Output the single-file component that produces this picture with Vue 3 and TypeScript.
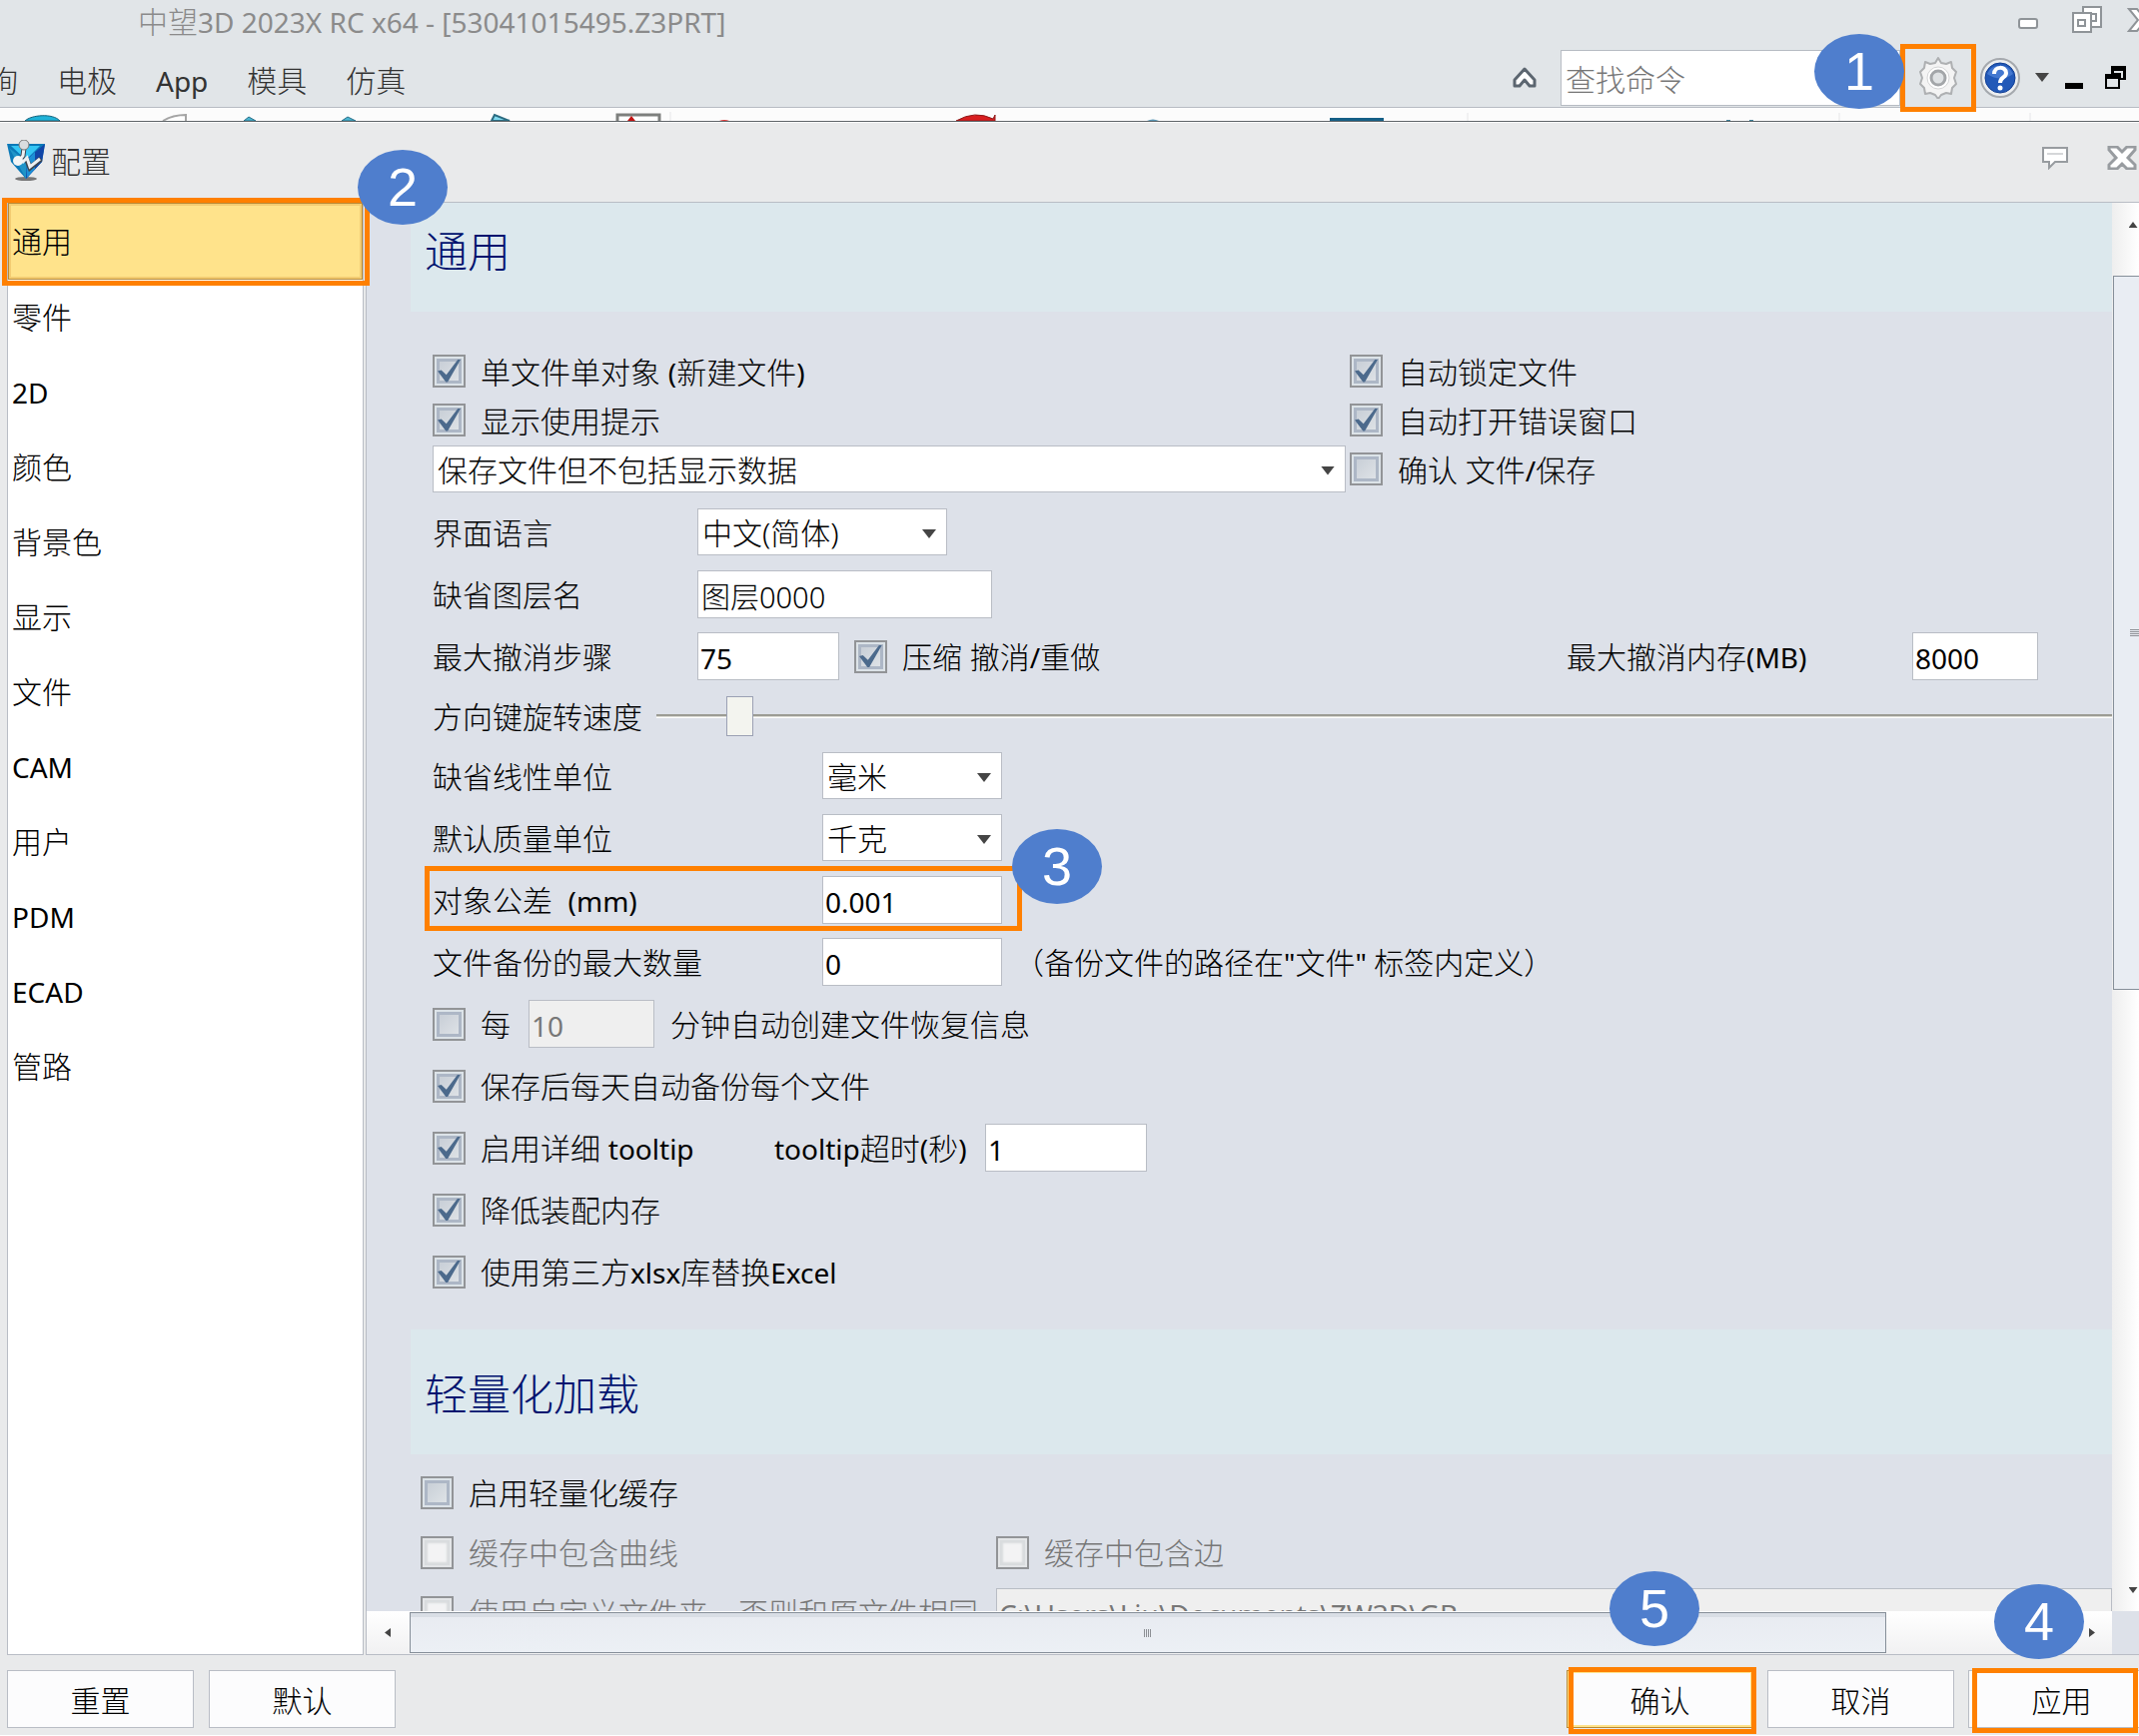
<script setup lang="ts">
import { ref } from 'vue'

interface Category {
  name: string
  latin?: boolean
}

const categories: Category[] = [
  { name: '通用' },
  { name: '零件' },
  { name: '2D', latin: true },
  { name: '颜色' },
  { name: '背景色' },
  { name: '显示' },
  { name: '文件' },
  { name: 'CAM', latin: true },
  { name: '用户' },
  { name: 'PDM', latin: true },
  { name: 'ECAD', latin: true },
  { name: '管路' },
]
const active = ref('通用')

const form = ref({
  singleObject: true,
  showTips: true,
  autoLock: true,
  autoError: true,
  confirmSave: false,
  saveMode: '保存文件但不包括显示数据',
  language: '中文(简体)',
  layer: '图层0000',
  undoSteps: '75',
  compressUndo: true,
  undoMemory: '8000',
  speed: 49,
  linearUnit: '毫米',
  massUnit: '千克',
  tolerance: '0.001',
  backups: '0',
  recovery: false,
  minutes: '10',
  dailyBackup: true,
  tooltip: true,
  timeout: '1',
  lowMemory: true,
  xlsx: true,
  cache: false,
  curves: false,
  edges: false,
  customDir: false,
  dir: 'C:\\Users\\Liu\\Documents\\ZW3D\\GB',
})
</script>

<template>
  <div class="app">
    <header class="titlebar">
      <h1 class="title">中望<span class="lat">3D 2023X RC x64 - [53041015495.Z3PRT]</span></h1>
      <div class="window-controls">
        <button type="button" aria-label="最小化">
          <svg width="22" height="28"><rect x="2" y="13" width="18" height="9" rx="2" fill="#fff" stroke="#8f9498" stroke-width="2" /></svg>
        </button>
        <button type="button" aria-label="还原">
          <svg width="32" height="28" fill="#fff" stroke="#8f9498" stroke-width="2">
            <path d="M12 1h18v20H12z" /><path d="M18 8h7v7h-7z" />
            <path d="M2 7h18v19H2z" /><path d="M7 14h7v6H7z" />
          </svg>
        </button>
        <button type="button" class="close" aria-label="关闭">
          <svg width="30" height="28"><path d="M2 3h8l5 6 5-6h8l-9 11 9 11h-8l-5-6-5 6H2l9-11z" fill="#fff" stroke="#8f9498" stroke-width="2" /></svg>
        </button>
      </div>
    </header>

    <div class="menubar">
      <nav class="menu">
        <a href="#">查询</a>
        <a href="#">电极</a>
        <a href="#" class="lat">App</a>
        <a href="#">模具</a>
        <a href="#">仿真</a>
      </nav>
      <div class="tools">
        <button type="button" class="collapse" aria-label="折叠">
          <svg width="24" height="22"><path d="M12 2 22 13v6h-5l-5-6-5 6H2v-6z" fill="#fff" stroke="#5c6670" stroke-width="3" stroke-linejoin="round" /></svg>
        </button>
        <input class="search" type="text" placeholder="查找命令" aria-label="查找命令" />
        <div class="gear-slot">
          <button type="button" class="gear" aria-label="配置">
            <svg width="42" height="42" viewBox="0 0 42 42">
              <path d="M21 1l3 5 5 1 5-2 1 6 4 4-2 6 2 6-4 4-1 6-5-1-5 2-3 4-3-4-5-2-5 1-1-6-4-4 2-6-2-6 4-4 1-6 5 2 5-1z" fill="#f4f4f4" stroke="#aeb0b2" stroke-width="2" stroke-linejoin="round" />
              <circle cx="21" cy="21" r="11" fill="#fff" stroke="#d4d5d6" />
              <circle cx="21" cy="21" r="7" fill="#dfe2e4" stroke="#a3a6a9" stroke-width="3" />
            </svg>
          </button>
          <span class="badge badge-1">1</span>
        </div>
        <button type="button" class="help" aria-label="帮助">
          <svg width="42" height="42" viewBox="0 0 42 42">
            <circle cx="21" cy="21" r="19" fill="#eceef0" stroke="#a5a9ae" stroke-width="2" />
            <circle cx="21" cy="21" r="15" fill="#2259b8" stroke="#123f94" stroke-width="1" />
            <path d="M8 17a14 13 0 0 1 26 0c-8 6-17 6-26 0z" fill="#5b8ee0" opacity=".6" />
            <path d="M15 17c0-8 12-8 12-1 0 5-6 4-6 10" fill="none" stroke="#fff" stroke-width="4" />
            <circle cx="21" cy="31" r="2.500" fill="#fff" />
          </svg>
        </button>
        <button type="button" class="more" aria-label="更多">
          <svg width="14" height="10"><path d="M0 0h14L7 9z" fill="#454545" /></svg>
        </button>
        <button type="button" class="mdi-min" aria-label="最小化文档">
          <svg width="18" height="24"><path d="M0 17h18v6H0z" fill="#000" /></svg>
        </button>
        <button type="button" aria-label="还原文档">
          <svg width="22" height="24"><path d="M6 0h15v14h-6V8H6z" /><path d="M9 5h9v7h-2V7H9z" fill="#e1e5e8" /><path d="M0 8h15v15H0z" /><path d="M2 13h11v8H2z" fill="#e1e5e8" /></svg>
        </button>
      </div>
    </div>

    <div class="ribbon" aria-hidden="true">
      <svg width="2141" height="13">
        <path d="M25 13c6-6 28-8 35 0z" fill="#1fb2d8" stroke="#16637c" />
        <path d="M163 13q10-6 23-6v6" fill="#fff" stroke="#a5a5a5" stroke-width="2" />
        <path d="m244 13 5-4 7 4zM342 13l6-4 8 4z" fill="#4bb6d2" stroke="#286f88" />
        <path d="m492 13 3-6 15 6z" fill="#7fd9ef" stroke="#2b6b80" stroke-width="2" />
        <path d="M618 13V7h42v6" fill="#fff" stroke="#7e807e" stroke-width="3" /><path d="m628 13 4-5 4 5z" fill="#c31212" />
        <path d="M720 13q5-2 10 0z" fill="#d33" />
        <path d="M957 13q19-11 37-2l2-4v6z" fill="#d81e20" stroke="#8f1a1a" />
        <path d="M1148 13q6-3 12 0z" fill="#5895b4" />
        <path d="M1331 10h54v3h-54z" fill="#155f86" />
        <path d="M1728 12h4v1h-4zM1751 12h4v1h-4z" fill="#3c7f98" />
        <path d="M671 4v9M1469 5v8M1841 5v8M2032 5v8" stroke="#e6e6e8" />
      </svg>
    </div>

    <section class="dialog">
      <header class="dialog-head">
        <svg class="logo" width="38" height="42" viewBox="0 0 38 42">
          <ellipse cx="19" cy="39" rx="11" ry="2" fill="#777" />
          <path d="M0 4h38l-3 18-16 17L4 22z" fill="#0b79b8" />
          <path d="M4 6h29L19 20z" fill="#35c6f4" />
          <path d="M38 4 19 20v19l16-17z" fill="#1146a8" />
          <path d="M28 12 20 20v18l8-9z" fill="#1c8fd6" />
          <path d="M2 8 19 39 20 22z" fill="#1f94c8" />
          <path d="m17 8-1 8-5 6M19 18l4 10 11-9" fill="none" stroke="#3d4650" stroke-width="5" />
          <path d="m17 8-1 8-5 6M15 23l5-5 3 9 10-8" fill="none" stroke="#eceff1" stroke-width="3" />
          <circle cx="17" cy="5" r="5" fill="#d9dddf" stroke="#777" />
          <circle cx="11" cy="21" r="5" fill="#f2f4f5" />
        </svg>
        <h2>配置</h2>
        <div class="dialog-controls">
          <button type="button" aria-label="反馈">
            <svg width="28" height="24"><path d="M2 2h24v14H14l-6 6v-6H2z" fill="#fff" stroke="#989ca0" stroke-width="2" /><path d="M6 7h16v2H6z" fill="#d5d7d9" /></svg>
          </button>
          <button type="button" aria-label="关闭">
            <svg width="30" height="24"><path d="M2 1h8l5 5 5-5h8v3l-7 8 7 7v4h-8l-5-5-5 5H2v-4l7-7-7-8z" fill="#fff" stroke="#989ca0" stroke-width="3" /></svg>
          </button>
        </div>
      </header>

      <div class="dialog-body">
        <aside class="sidebar">
          <button
            v-for="c in categories"
            :key="c.name"
            type="button"
            :class="['cat', { active: active === c.name }]"
            @click="active = c.name"
          >
            <span :class="{ lat: c.latin }">{{ c.name }}</span>
            <span v-if="active === c.name" class="mark mark-cat"></span>
            <span v-if="active === c.name" class="badge badge-2">2</span>
          </button>
        </aside>

        <div class="panel">
          <div class="view">
            <main class="content">
              <h3 class="band band-first">通用</h3>
              <div class="top-grid">
                <label class="row check"><input v-model="form.singleObject" type="checkbox" /><span>单文件单对象 <span class="lat">(</span>新建文件<span class="lat">)</span></span></label>
                <label class="row check"><input v-model="form.autoLock" type="checkbox" /><span>自动锁定文件</span></label>
                <label class="row check"><input v-model="form.showTips" type="checkbox" /><span>显示使用提示</span></label>
                <label class="row check"><input v-model="form.autoError" type="checkbox" /><span>自动打开错误窗口</span></label>
                <div class="row">
                  <div class="select full"><select v-model="form.saveMode" aria-label="保存方式"><option>保存文件但不包括显示数据</option></select></div>
                </div>
                <label class="row check"><input v-model="form.confirmSave" type="checkbox" /><span>确认 文件<span class="lat">/</span>保存</span></label>
              </div>

              <div class="form">
                <div class="row">
                  <label class="name" for="lang">界面语言</label>
                  <div class="select w-lang"><select id="lang" v-model="form.language"><option>中文(简体)</option></select></div>
                </div>
                <div class="row">
                  <label class="name" for="layer">缺省图层名</label>
                  <input id="layer" v-model="form.layer" class="text w-layer" type="text" />
                </div>
                <div class="row">
                  <label class="name" for="undo">最大撤消步骤</label>
                  <input id="undo" v-model="form.undoSteps" class="text w-undo" type="text" />
                  <label class="check undo-check"><input v-model="form.compressUndo" type="checkbox" /><span>压缩 撤消<span class="lat">/</span>重做</span></label>
                  <div class="memory">
                    <label class="plain" for="mem">最大撤消内存<span class="lat">(MB)</span></label>
                    <input id="mem" v-model="form.undoMemory" class="text w-num" type="text" />
                  </div>
                </div>
                <div class="row slider-row">
                  <label class="plain" for="speed">方向键旋转速度</label>
                  <input id="speed" v-model="form.speed" type="range" min="0" max="1000" />
                </div>
                <div class="row">
                  <label class="name wide" for="linear">缺省线性单位</label>
                  <div class="select w-unit"><select id="linear" v-model="form.linearUnit"><option>毫米</option></select></div>
                </div>
                <div class="row">
                  <label class="name wide" for="mass">默认质量单位</label>
                  <div class="select w-unit"><select id="mass" v-model="form.massUnit"><option>千克</option></select></div>
                </div>
                <div class="row">
                  <div class="tolerance">
                    <label class="name wide" for="tol">对象公差&nbsp; <span class="lat">(mm)</span></label>
                    <input id="tol" v-model="form.tolerance" class="text w-unit" type="text" />
                    <span class="mark mark-tol"></span>
                    <span class="badge badge-3">3</span>
                  </div>
                </div>
                <div class="row">
                  <label class="name wide" for="backups">文件备份的最大数量</label>
                  <input id="backups" v-model="form.backups" class="text w-unit" type="text" />
                  <span class="note plain">（备份文件的路径在<span class="lat">"</span>文件<span class="lat">" </span>标签内定义）</span>
                </div>
                <div class="row">
                  <label class="check"><input v-model="form.recovery" type="checkbox" /><span>每</span></label>
                  <input v-model="form.minutes" class="text w-num minutes" type="text" aria-label="分钟" disabled />
                  <span class="plain">分钟自动创建文件恢复信息</span>
                </div>
                <label class="row check"><input v-model="form.dailyBackup" type="checkbox" /><span>保存后每天自动备份每个文件</span></label>
                <div class="row">
                  <label class="check tip-check"><input v-model="form.tooltip" type="checkbox" /><span>启用详细 <span class="lat">tooltip</span></span></label>
                  <label class="tip-name plain" for="timeout"><span class="lat">tooltip</span>超时<span class="lat">(</span>秒<span class="lat">)</span></label>
                  <input id="timeout" v-model="form.timeout" class="text w-time" type="text" />
                </div>
                <label class="row check"><input v-model="form.lowMemory" type="checkbox" /><span>降低装配内存</span></label>
                <label class="row check"><input v-model="form.xlsx" type="checkbox" /><span>使用第三方<span class="lat">xlsx</span>库替换<span class="lat">Excel</span></span></label>
              </div>

              <h3 class="band">轻量化加载</h3>
              <div class="cache">
                <label class="row check"><input v-model="form.cache" type="checkbox" /><span>启用轻量化缓存</span></label>
                <span></span>
                <label class="row check off"><input v-model="form.curves" type="checkbox" disabled /><span>缓存中包含曲线</span></label>
                <label class="row check off"><input v-model="form.edges" type="checkbox" disabled /><span>缓存中包含边</span></label>
                <label class="row check off"><input v-model="form.customDir" type="checkbox" disabled /><span>使用自定义文件夹，否则和原文件相同</span></label>
                <div class="row"><input v-model="form.dir" class="text full" type="text" aria-label="缓存文件夹" disabled /></div>
              </div>
            </main>
            <div class="vbar">
              <span class="arrow up"></span>
              <div class="vthumb"><span class="vgrip"></span></div>
              <span class="arrow down"></span>
            </div>
          </div>
          <div class="hbar">
            <span class="arrow left"></span>
            <div class="hthumb"><span class="hgrip"></span></div>
            <span class="arrow right"></span>
            <span class="corner"></span>
          </div>
        </div>
      </div>

      <footer class="actions">
        <button type="button" class="btn">重置</button>
        <button type="button" class="btn second">默认</button>
        <div class="action push">
          <button type="button" class="btn primary">确认</button>
          <span class="mark mark-ok"></span>
          <span class="badge badge-5">5</span>
        </div>
        <button type="button" class="btn">取消</button>
        <div class="action last">
          <button type="button" class="btn">应用</button>
          <span class="mark mark-apply"></span>
          <span class="badge badge-4">4</span>
        </div>
      </footer>
    </section>
  </div>
</template>

<style>
body {
  margin: 0;
  overflow: hidden;
}
</style>

<style scoped>
.app {
  display: flex;
  flex-direction: column;
  height: 100vh;
  overflow: hidden;
  background: #e9eaeb;
  color: #000;
  font-family: 'Noto Sans', 'Noto Sans CJK SC', sans-serif;
  font-size: 30px;
  font-weight: 300;
  line-height: 44px;
  white-space: nowrap;
}
.app *,
.app *::before,
.app *::after {
  box-sizing: border-box;
}
button,
input,
select {
  margin: 0;
  padding: 0;
  border: 0;
  border-radius: 0;
  background: none;
  color: inherit;
  font: inherit;
}
svg {
  display: block;
}
h1,
h2,
h3 {
  margin: 0;
  font-size: 30px;
  font-weight: 300;
}
.lat {
  font-size: 28px;
  font-weight: 400;
}

.titlebar {
  display: flex;
  align-items: center;
  height: 44px;
  flex: none;
  padding-left: 138px;
  background: #e1e5e8;
}
.title {
  color: #8b8b8b;
}
.window-controls {
  display: flex;
  gap: 32px;
  margin: 0 -18px 4px auto;
}
.close {
  margin-left: -8px;
}
.menubar {
  display: flex;
  align-items: center;
  height: 64px;
  flex: none;
  border-bottom: 1px solid #b7bcc3;
  background: #e1e5e8;
}
.menu {
  display: flex;
  gap: 39px;
  margin: 10px 0 0 -42px;
}
.menu a {
  color: #333;
  text-decoration: none;
}
.tools {
  display: flex;
  align-items: center;
  margin-left: auto;
  padding: 4px 12px 0 0;
}
.collapse {
  margin-right: 24px;
}
.search {
  width: 340px;
  height: 56px;
  padding: 4px 4px 0;
  border: 1px solid #b7bcc3;
  background: #fff;
}
.search::placeholder {
  color: #777;
  opacity: 1;
}
.gear-slot {
  position: relative;
}
.gear {
  display: grid;
  place-items: center;
  width: 76px;
  height: 68px;
  border: 5px solid #ff8000;
}
.help {
  margin: 0 14px 0 3px;
}
.mdi-min {
  margin: 0 22px 0 16px;
}
.ribbon {
  height: 14px;
  flex: none;
  overflow: hidden;
  border-bottom: 1px solid #5f6569;
  background: #fcfcfc;
}

.badge {
  position: absolute;
  z-index: 3;
  display: grid;
  place-items: center;
  width: 90px;
  height: 75px;
  border-radius: 50%;
  background: #4f7ecd;
  color: #fff;
  font-family: 'Liberation Sans', Arial, sans-serif;
  font-size: 54px;
  font-weight: 400;
  line-height: 75px;
}
.badge-1 {
  top: -10px;
  left: -86px;
}
.badge-2 {
  top: -54px;
  left: 349px;
}
.badge-3 {
  top: -47px;
  right: -100px;
}
.badge-4 {
  top: -86px;
  left: 26px;
}
.badge-5 {
  top: -99px;
  left: 43px;
}
.mark {
  position: absolute;
  z-index: 2;
  border: 5px solid #ff8000;
  pointer-events: none;
}
.mark-cat {
  inset: -6px -8px -7px -7px;
}
.mark-tol {
  inset: -10px -20px -7px -8px;
}
.mark-ok {
  inset: -3px -3px -6px 2px;
}
.mark-apply {
  inset: -2px 1px -5px 4px;
}

.dialog {
  display: flex;
  flex: 1;
  flex-direction: column;
  min-height: 0;
}
.dialog-head {
  display: flex;
  align-items: center;
  height: 80px;
  flex: none;
  padding: 0 2px 4px 7px;
  border-top: 1px solid #fff;
  color: #333;
}
.dialog-head h2 {
  margin-left: 6px;
  padding-top: 2px;
}
.dialog-controls {
  display: flex;
  gap: 38px;
  margin: 0 0 6px auto;
}
.dialog-body {
  display: flex;
  flex: 1;
  min-height: 0;
  gap: 2px;
  padding-left: 7px;
}
.sidebar {
  width: 357px;
  flex: none;
  border: 1px solid #b9bdc5;
  background: #fff;
}
.cat {
  position: relative;
  display: block;
  width: 100%;
  height: 75px;
  padding-left: 4px;
  text-align: left;
}
.cat.active {
  height: 77px;
  border: 1px solid #b98a36;
  box-shadow: inset 0 0 0 2px #f3cc72;
  background: #ffe38b;
}
.cat.active > span:first-child {
  margin-left: -1px;
}
.panel {
  display: flex;
  flex: 1;
  flex-direction: column;
  min-width: 0;
  border: solid #b9bdc5;
  border-width: 1px 0 1px 1px;
  background: #dde1e9;
}
.view {
  display: flex;
  flex: 1;
  min-height: 0;
}
.content {
  flex: 1;
  min-width: 0;
  overflow: hidden;
  padding-left: 44px;
}
.band {
  display: flex;
  align-items: center;
  height: 125px;
  padding: 4px 0 0 14px;
  background: #dce8ed;
  color: #00126e;
  font-size: 43px;
  font-weight: 300;
}
.band-first {
  height: 109px;
  padding: 0 0 12px 14px;
}
.top-grid {
  display: grid;
  grid-template-columns: 914px 1fr;
  column-gap: 4px;
  padding: 35px 0 8px 22px;
}
.row {
  display: flex;
  align-items: center;
  height: 62px;
}
.top-grid .row {
  height: 49px;
}
.form {
  padding: 0 0 27px 22px;
}
.check {
  display: flex;
  align-items: center;
  gap: 15px;
}
.check > span,
.plain {
  padding-top: 2px;
}
input[type='checkbox'] {
  display: grid;
  place-items: center;
  appearance: none;
  width: 33px;
  height: 33px;
  flex: none;
  border: 2px solid #929497;
  box-shadow: inset 0 0 0 2px #dce3e8, inset 0 0 0 5px #adb7c6;
  background: linear-gradient(135deg, #c3cad3, #e3e7ea);
}
input[type='checkbox']:checked::after {
  content: '';
  width: 23px;
  height: 23px;
  background: #4c6a8c;
  clip-path: polygon(0 50%, 16% 46%, 38% 66%, 88% 0, 100% 0, 44% 98%, 36% 98%);
}
input[type='checkbox']:disabled {
  box-shadow: inset 0 0 0 2px #e4e6e8, inset 0 0 2px 5px #d9dcde;
  background: #f3f3f4;
}
.name {
  width: 265px;
  flex: none;
  padding-top: 2px;
}
.name.wide {
  width: 390px;
}
.text {
  height: 48px;
  padding: 3px 2px 0;
  border: 1px solid #b9bdc5;
  background: #fff;
  font-size: 28px;
  font-weight: 400;
}
.text:disabled {
  background: #efefef;
  color: #777;
}
.select {
  position: relative;
  height: 48px;
}
.select select {
  display: block;
  appearance: none;
  width: 100%;
  height: 47px;
  padding: 2px 30px 0 4px;
  border: 1px solid #b9bdc5;
  background: #fff;
}
.select::after {
  content: '';
  position: absolute;
  top: 21px;
  right: 11px;
  width: 14px;
  height: 9px;
  background: #454545;
  clip-path: polygon(0 0, 100% 0, 50% 100%);
  pointer-events: none;
}
.full {
  width: 100%;
}
.w-lang {
  width: 250px;
}
.text.w-layer {
  width: 295px;
  padding: 1px 3px 0;
  font-size: 29px;
  font-weight: 300;
}
.w-undo {
  width: 142px;
}
.w-num {
  width: 126px;
}
.w-unit {
  width: 180px;
}
.w-time {
  width: 162px;
}
.undo-check {
  margin-left: 15px;
}
.memory {
  display: flex;
  align-items: center;
  justify-content: space-between;
  width: 472px;
  margin: 0 74px 0 auto;
}
.slider-row {
  height: 58px;
  gap: 14px;
}
input[type='range'] {
  appearance: none;
  flex: 1;
  min-width: 0;
  height: 40px;
}
input[type='range']::-webkit-slider-runnable-track {
  height: 4px;
  border-top: 2px solid #9c9c94;
  border-bottom: 1px solid #fff;
  background: #dcdcd6;
}
input[type='range']::-webkit-slider-thumb {
  appearance: none;
  width: 27px;
  height: 40px;
  margin-top: -20px;
  border: 1px solid #9ba1b4;
  background: #f3f4ef;
}
.tolerance {
  position: relative;
  display: flex;
  align-items: center;
}
.note {
  margin-left: 12px;
}
.minutes {
  margin: 0 16px 0 18px;
}
.tip-check {
  width: 342px;
}
.tip-name {
  width: 211px;
}
.cache {
  display: grid;
  grid-template-columns: 576px 1fr;
  padding: 8px 0 0 10px;
}
.cache .row {
  height: 60px;
}
.off {
  color: #777;
}

.vbar {
  display: flex;
  flex-direction: column;
  align-items: center;
  width: 27px;
  flex: none;
  padding-left: 1px;
  overflow: hidden;
  background: linear-gradient(90deg, #eee, #fff);
}
.vthumb {
  display: flex;
  align-items: center;
  justify-content: flex-end;
  width: 26px;
  height: 715px;
  margin-top: 48px;
  border: 1px solid #868f99;
  border-right: 0;
  background: #e9edf3;
}
.vgrip {
  width: 9px;
  height: 8px;
  background: repeating-linear-gradient(#8d9095 0 1px, transparent 1px 2px);
}
.arrow {
  flex: none;
  background: #444;
}
.up,
.down {
  width: 9px;
  height: 6px;
  margin-left: 14px;
}
.up {
  margin-top: 19px;
  clip-path: polygon(50% 0, 100% 100%, 0 100%);
}
.down {
  margin: auto 0 18px 14px;
  clip-path: polygon(0 0, 100% 0, 50% 100%);
}
.hbar {
  display: flex;
  align-items: center;
  height: 43px;
  flex: none;
  background: linear-gradient(#fff, #f1f1f2);
}
.hthumb {
  display: grid;
  place-items: center;
  width: 1478px;
  height: 41px;
  margin-left: 19px;
  border: 1px solid #868f99;
  box-shadow: inset 0 4px #d9dee5;
  background: linear-gradient(#e8ebf1, #ecf0f5);
}
.hgrip {
  width: 8px;
  height: 8px;
  background: repeating-linear-gradient(90deg, #8d9095 0 1px, transparent 1px 2px);
}
.left,
.right {
  width: 6px;
  height: 9px;
}
.left {
  margin-left: 18px;
  clip-path: polygon(100% 0, 100% 100%, 0 50%);
}
.right {
  margin-left: auto;
  clip-path: polygon(0 0, 100% 50%, 0 100%);
}
.corner {
  align-self: stretch;
  width: 27px;
  margin-left: 17px;
  background: #dde1e9;
}

.actions {
  display: flex;
  align-items: flex-start;
  height: 81px;
  flex: none;
  gap: 14px;
  padding: 15px 0 0 7px;
  border-bottom: 1px solid #fff;
}
.btn {
  display: block;
  width: 187px;
  height: 58px;
  padding-top: 4px;
  border: 1px solid #b9bdc5;
  background: #fcfcfd;
  text-align: center;
}
.second {
  margin-left: 1px;
}
.action {
  position: relative;
}
.push {
  margin-left: auto;
}
.primary {
  border-color: #b98a36;
  box-shadow: inset 0 0 0 2px #ffe38b;
}
.last {
  width: 171px;
}
</style>
